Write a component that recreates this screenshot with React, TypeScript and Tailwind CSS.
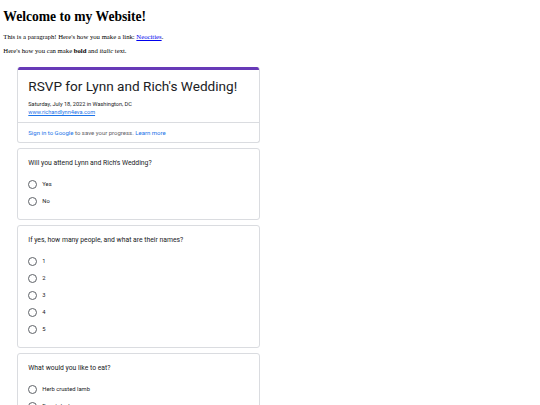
const attend = ["Yes", "No"]
const people = ["1", "2", "3", "4", "5"]
const food = ["Herb crusted lamb", "Roast duck", "Vegetable risotto"]

function Radio({ label }: { label: string }) {
  return (
    <label className="flex items-center gap-[5px] h-[9px]">
      <span className="w-[9px] h-[9px] rounded-full border border-[#5f6368] shrink-0" />
      <span className="text-[5.8px] text-[#202124]">{label}</span>
    </label>
  )
}

function Question({ title, options }: { title: string; options: string[] }) {
  return (
    <div className="bg-white border border-[#dadce0] rounded-[3px] px-[10px] pt-[10px] pb-[13px]">
      <div className="text-[6.8px] text-[#202124] leading-[9px]">{title}</div>
      <div className="flex flex-col gap-[8px] mt-[12px]">
        {options.map((o) => (
          <Radio key={o} label={o} />
        ))}
      </div>
    </div>
  )
}

export default function App() {
  return (
    <div className="bg-white min-h-[405px] px-[3.3px] font-['Liberation_Serif',serif] text-black">
      <h1 className="text-[13.6px] font-bold leading-[15px] mt-[9px] mb-[9px]">
        Welcome to my Website!
      </h1>
      <p className="text-[6.7px] leading-[7.6px] my-[6.6px]">
        This is a paragraph! Here's how you make a link:{" "}
        <a href="#" className="text-[#0000ee] underline">Neocities</a>.
      </p>
      <p className="text-[6.7px] leading-[7.6px] my-[6.6px]">
        Here's how you can make <b>bold</b> and <i>italic</i> text.
      </p>

      <div className="w-[243px] ml-[14px] mt-[12px] flex flex-col gap-[5px] font-['Roboto',sans-serif]">
        <div className="bg-white border border-[#dadce0] border-t-0 rounded-[3px] overflow-hidden">
          <div className="h-[3px] bg-[#673ab7]" />
          <div className="px-[10px] pt-[6px] pb-[6px]">
            <div className="text-[13.6px] leading-[20px] text-[#202124]">
              RSVP for Lynn and Rich's Wedding!
            </div>
            <div className="text-[5.6px] leading-[8px] text-[#202124] mt-[4px]">
              Saturday, July 18, 2022 in Washington, DC
            </div>
            <a href="#" className="block text-[5.6px] leading-[8px] text-[#1a73e8] underline">
              www.richandlynn4eva.com
            </a>
          </div>
          <div className="border-t border-[#dadce0] px-[10px] py-[6px] text-[6px] leading-[7px] text-[#5f6368]">
            <span className="text-[#1a73e8]">Sign in to Google</span> to save your progress.{" "}
            <span className="text-[#1a73e8]">Learn more</span>
          </div>
        </div>

        <Question title="Will you attend Lynn and Rich's Wedding?" options={attend} />
        <Question title="If yes, how many people, and what are their names?" options={people} />
        <Question title="What would you like to eat?" options={food} />
      </div>
    </div>
  )
}
